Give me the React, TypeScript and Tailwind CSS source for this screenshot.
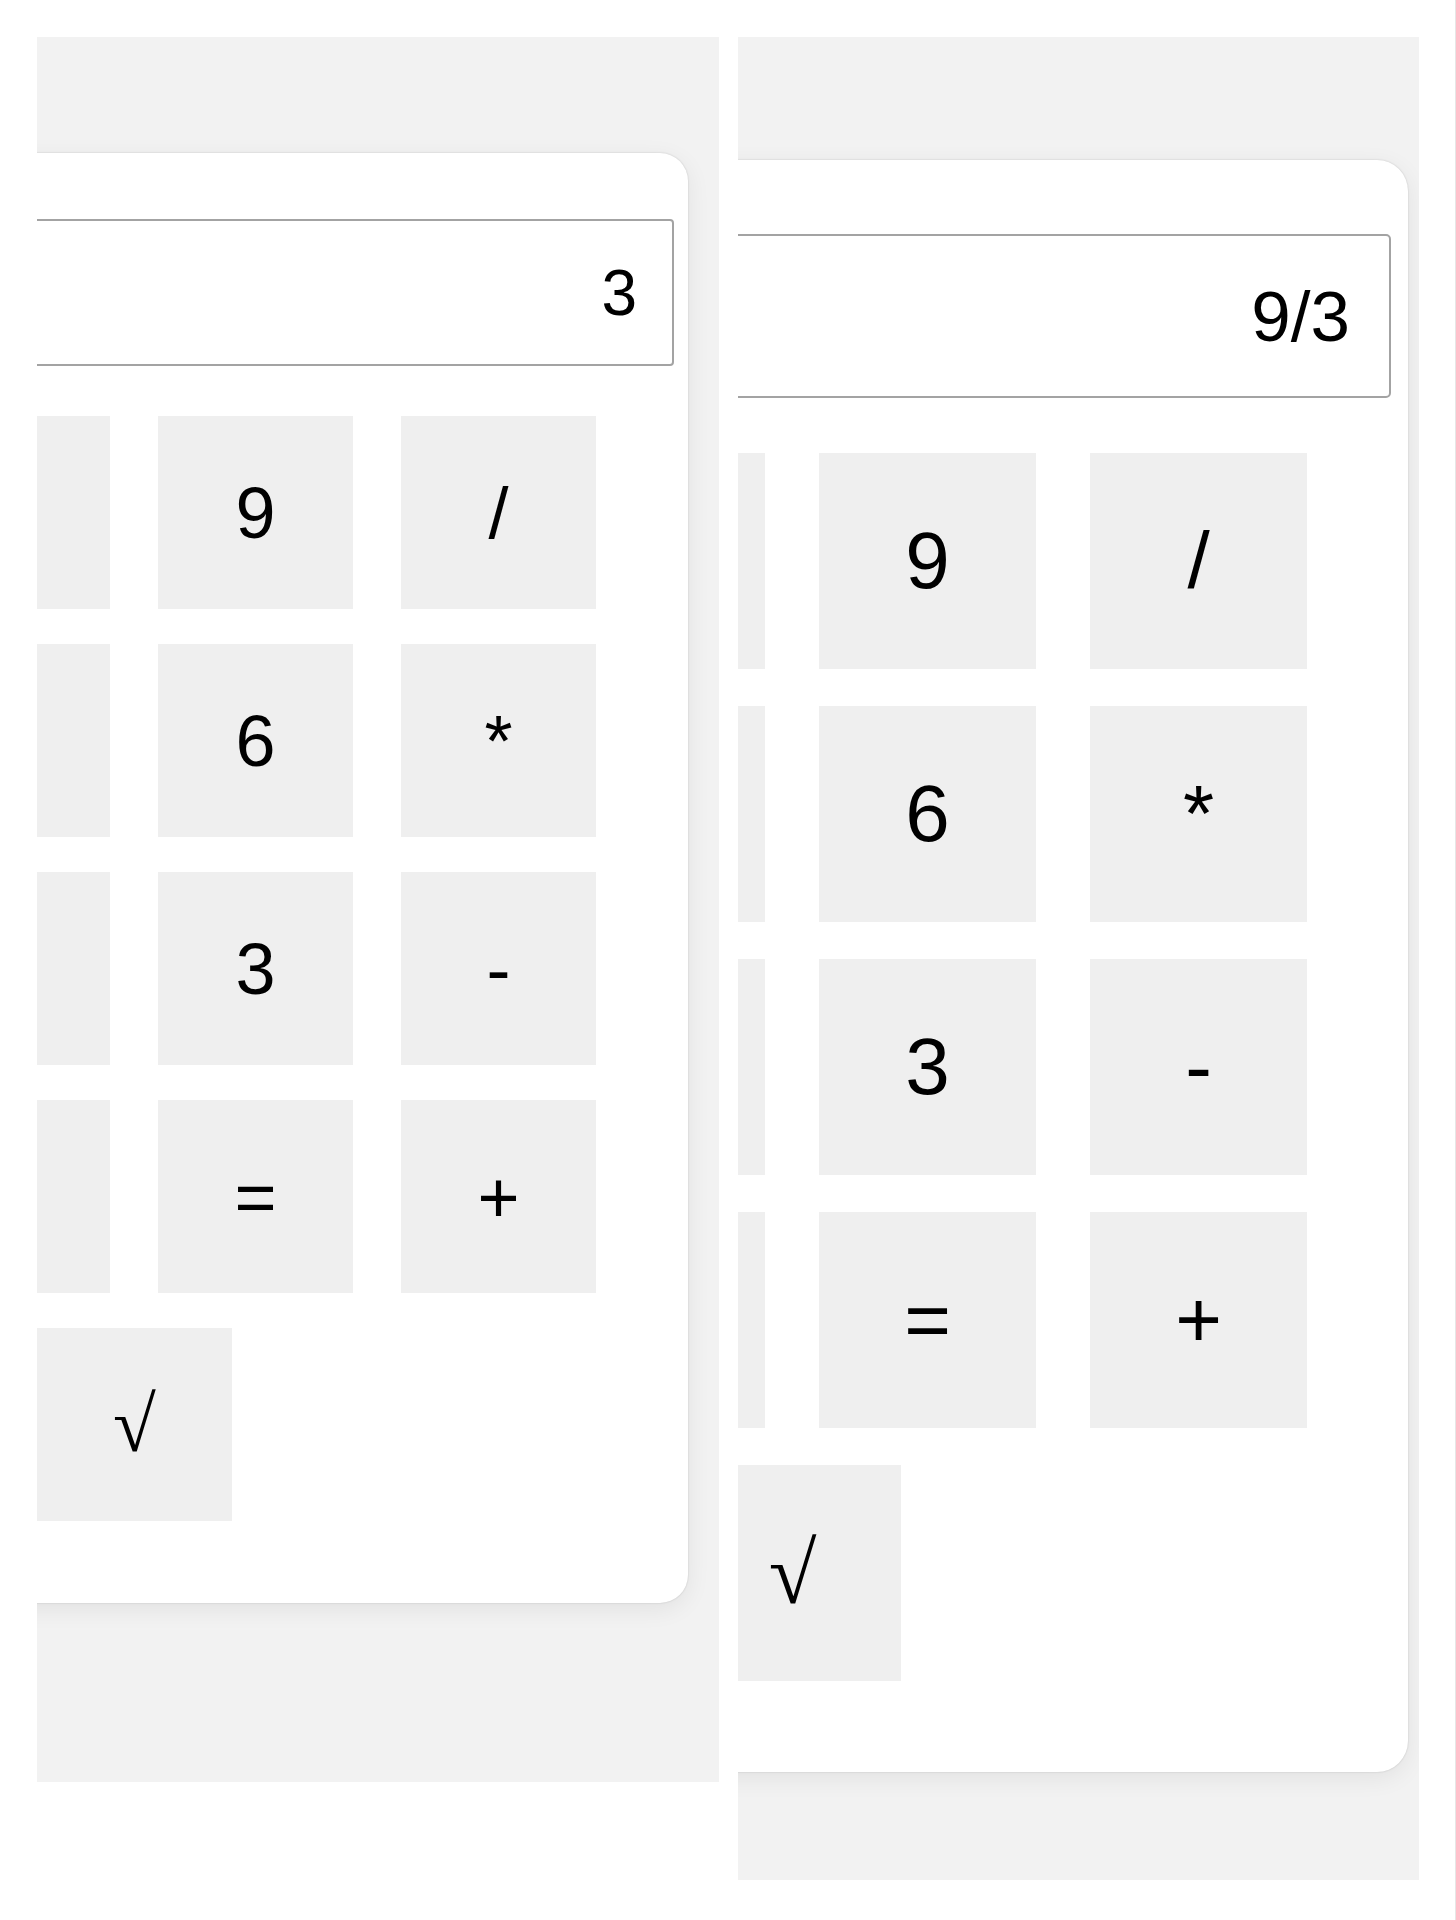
import React from 'react';

type Size = 'sm' | 'lg';

// the two leftmost columns fall outside the cropped panel, so they carry no label
const rows: string[][] = [
  ['', '', '9', '/'],
  ['', '', '6', '*'],
  ['', '', '3', '-'],
  ['', '', '=', '+'],
];

const styles = {
  sm: {
    panel: 'w-[682px] h-[1745px]',
    card: 'mt-[116px] ml-[-405px] w-[1056px] pt-[66px] pr-[14px] pb-[82px] pl-[40px] rounded-[28px]',
    display: 'h-[147px] pr-[35px] text-[64px] rounded-[4px]',
    keypad: 'mt-[50px] gap-y-[35px]',
    row: 'gap-x-[48px]',
    lastRow: 'gap-x-[48px] pl-[122px]',
    keyBox: 'w-[195px] h-[193px]',
    keyText: 'text-[72px]',
    rootText: 'text-[78px]',
  },
  lg: {
    panel: 'w-[681px] h-[1843px]',
    card: 'mt-[123px] ml-[-505px] w-[1175px] pt-[74px] pr-[17px] pb-[91px] pl-[44px] rounded-[31px]',
    display: 'h-[164px] pr-[39px] text-[71px] rounded-[5px]',
    keypad: 'mt-[55px] gap-y-[37px]',
    row: 'gap-x-[54px]',
    lastRow: 'gap-x-[54px] pl-[136px]',
    keyBox: 'w-[217px] h-[216px]',
    keyText: 'text-[80px]',
    rootText: 'text-[87px]',
  },
};

const Key: React.FC<{ label: string; size: Size; serif?: boolean }> = ({ label, size, serif }) => {
  const s = styles[size];
  return (
    <button
      className={`${s.keyBox} ${serif ? `${s.rootText} font-['Liberation_Serif',serif]` : s.keyText} shrink-0 flex items-center justify-center bg-[#efefef] text-black leading-none`}
    >
      {label}
    </button>
  );
};

const Calculator: React.FC<{ value: string; size: Size }> = ({ value, size }) => {
  const s = styles[size];
  return (
    <div className={`${s.panel} overflow-hidden bg-[#f2f2f2]`}>
      <div className={`${s.card} bg-white shadow-[0_0_2px_rgba(0,0,0,0.18),0_6px_24px_rgba(0,0,0,0.07)]`}>
        <div className={`${s.display} flex items-center justify-end border-2 border-[#a3a3a3] bg-white text-black leading-none`}>
          {value}
        </div>
        <div className={`${s.keypad} flex flex-col`}>
          {rows.map((row, i) => (
            <div key={i} className={`${s.row} flex`}>
              {row.map((k, j) => (
                <Key key={j} label={k} size={size} />
              ))}
            </div>
          ))}
          <div className={`${s.lastRow} flex`}>
            <Key label="" size={size} />
            <Key label="√" size={size} serif />
          </div>
        </div>
      </div>
    </div>
  );
};

export default function App() {
  return (
    <div className="w-[1456px] h-[1920px] bg-white border-r border-[#e6e6e6] flex items-start gap-[19px] pt-[37px] pl-[37px] font-['Liberation_Sans',Arial,sans-serif]">
      <Calculator value="3" size="sm" />
      <Calculator value="9/3" size="lg" />
    </div>
  );
}
